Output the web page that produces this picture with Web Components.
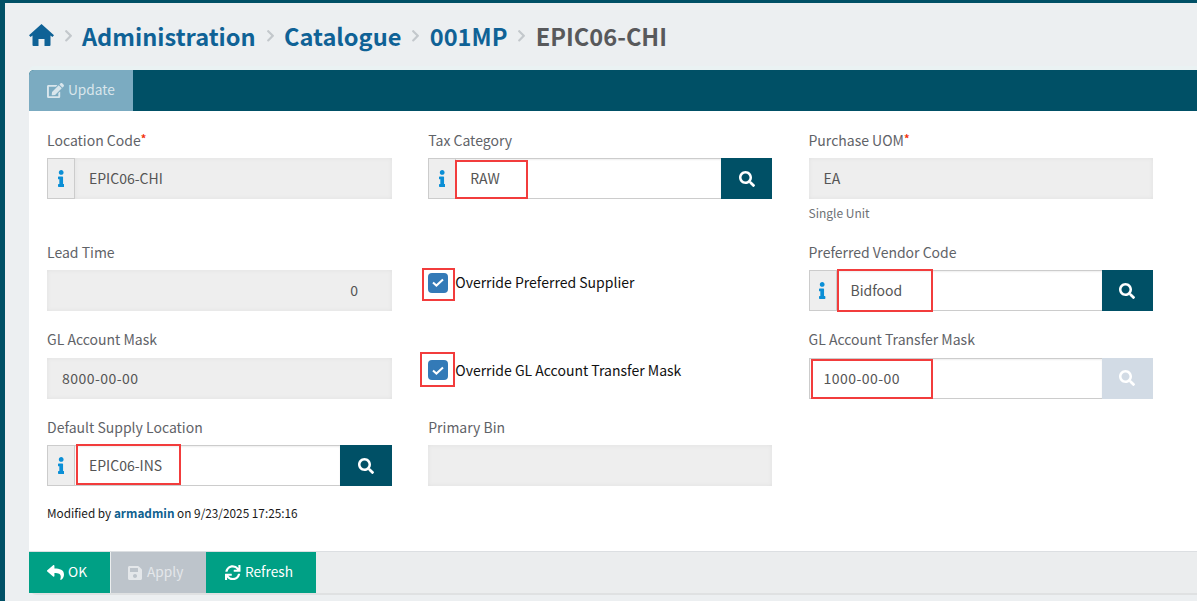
<!DOCTYPE html>
<html>
<head>
<meta charset="utf-8">
<title>Location</title>
<style>
html, body { margin: 0; height: 100%; overflow: hidden; }
body { font-family: "Noto Sans CJK SC", "Noto Sans", sans-serif; font-size: 14px; color: #555; background: #eceff1; }
</style>
</head>
<body>
<app-shell>
  <bread-crumbs slot="crumbs">
    <a>Administration</a>
    <a>Catalogue</a>
    <a>001MP</a>
    <b>EPIC06-CHI</b>
  </bread-crumbs>
  <form-panel>
    <fa-btn slot="tabs" icon="edit" kind="tab">Update</fa-btn>

    <form-field label="Location Code" required value="EPIC06-CHI" info></form-field>
    <form-field label="Tax Category" value="RAW" info lookup editable mark="27,2,73,39"></form-field>
    <form-field label="Purchase UOM" required value="EA" help="Single Unit"></form-field>

    <form-field label="Lead Time" value="0" number></form-field>
    <check-field label="Override Preferred Supplier" mark="-6,-5,33,33"></check-field>
    <form-field label="Preferred Vendor Code" value="Bidfood" info lookup editable mark="28,-1,96,43"></form-field>

    <form-field label="GL Account Mask" value="8000-00-00" mask></form-field>
    <check-field label="Override GL Account Transfer Mask" mark="-8,-8,35,35"></check-field>
    <form-field label="GL Account Transfer Mask" value="1000-00-00" mask lookup editable disabled mark="2,1,122,40"></form-field>

    <form-field label="Default Supply Location" value="EPIC06-INS" info lookup editable mark="29,-1,105,41" style="--find: 52px"></form-field>
    <form-field label="Primary Bin" value=""></form-field>

    <span slot="meta">Modified by <strong>armadmin</strong> on 9/23/2025 17:25:16</span>

    <fa-btn slot="actions" icon="reply">OK</fa-btn>
    <fa-btn slot="actions" icon="save" disabled>Apply</fa-btn>
    <fa-btn slot="actions" icon="refresh">Refresh</fa-btn>
  </form-panel>
</app-shell>

<script>
const FONT = '"Noto Sans CJK SC", "Noto Sans", sans-serif';
// [viewBox, path, width, height]
const ICONS = {
  home: ["0 0 25 22", "M12.5 0 25 11.2 23.4 13 21.5 11.5V21a1 1 0 0 1-1 1H15.5v-7h-6v7H4.5a1 1 0 0 1-1-1V11.5L1.6 13 0 11.2Z", 25, 22],
  chevron: ["27 37 265 438", "M285.476 272.971L91.132 467.314c-9.373 9.373-24.569 9.373-33.941 0l-22.667-22.667c-9.357-9.357-9.375-24.522-.04-33.901L188.505 256 34.484 101.255c-9.335-9.379-9.317-24.544.04-33.901l22.667-22.667c9.373-9.373 24.569-9.373 33.941 0L285.475 239.03c9.373 9.372 9.373 24.568.001 33.941z", 7, 11.6],
  search: ["0 0 512 512", "M505 442.7L405.3 343c-4.5-4.5-10.6-7-17-7H372c27.6-35.3 44-79.7 44-128C416 93.1 322.9 0 208 0S0 93.1 0 208s93.1 208 208 208c48.3 0 92.7-16.4 128-44v16.3c0 6.4 2.5 12.5 7 17l99.7 99.7c9.4 9.4 24.6 9.4 33.9 0l28.3-28.3c9.4-9.4 9.4-24.6.1-34zM208 336c-70.7 0-128-57.2-128-128 0-70.7 57.2-128 128-128 70.7 0 128 57.2 128 128 0 70.7-57.2 128-128 128z", 16, 16],
  edit: ["0 0 576 512", "M402.6 83.2l90.2 90.2c3.8 3.8 3.8 10 0 13.8L274.4 405.6l-92.8 10.3c-12.4 1.4-22.9-9.1-21.5-21.5l10.3-92.8L388.8 83.2c3.8-3.8 10-3.8 13.8 0zm162-22.9l-48.8-48.8c-15.2-15.2-39.9-15.2-55.2 0l-35.4 35.4c-3.8 3.8-3.8 10 0 13.8l90.2 90.2c3.8 3.8 10 3.8 13.8 0l35.4-35.4c15.2-15.3 15.2-40 0-55.2zM384 346.2V448H64V128h229.8c3.2 0 6.2-1.3 8.5-3.5l40-40c7.6-7.6 2.2-20.5-8.5-20.5H48C21.5 64 0 85.5 0 112v352c0 26.5 21.5 48 48 48h352c26.5 0 48-21.5 48-48V306.2c0-10.7-12.9-16-20.5-8.5l-40 40c-2.2 2.3-3.5 5.3-3.5 8.5z", 17, 15.1],
  reply: ["0 0 512 512", "M8.309 189.836L184.313 37.851C199.719 24.546 224 35.347 224 56.015v80.053c160.629 1.839 288 34.032 288 186.258 0 61.441-39.581 122.309-83.333 154.132-13.653 9.931-33.111-2.533-28.077-18.631 45.344-145.012-21.507-183.51-176.59-185.742V360c0 20.7-24.3 31.453-39.687 18.164l-176.004-152c-11.071-9.562-11.086-26.753 0-36.328z", 17, 17],
  save: ["0 32 448 448", "M433.941 129.941l-83.882-83.882A48 48 0 0 0 316.118 32H48C21.49 32 0 53.49 0 80v352c0 26.51 21.49 48 48 48h352c26.51 0 48-21.49 48-48V163.882a48 48 0 0 0-14.059-33.941zM224 416c-35.346 0-64-28.654-64-64 0-35.346 28.654-64 64-64s64 28.654 64 64c0 35.346-28.654 64-64 64zm96-304.52V212c0 6.627-5.373 12-12 12H76c-6.627 0-12-5.373-12-12V108c0-6.627 5.373-12 12-12h228.52c3.183 0 6.235 1.264 8.485 3.515l3.48 3.48A11.996 11.996 0 0 1 320 111.48z", 14, 14],
  refresh: ["0 0 512 512", "M440.65 12.57l4 82.77A247.16 247.16 0 0 0 255.83 8C134.73 8 33.91 94.92 12.29 209.82A12 12 0 0 0 24.09 224h49.05a12 12 0 0 0 11.67-9.26 175.91 175.91 0 0 1 317-56.94l-101.46-4.86a12 12 0 0 0-12.57 12v47.41a12 12 0 0 0 12 12H500a12 12 0 0 0 12-12V12a12 12 0 0 0-12-12h-47.37a12 12 0 0 0-11.98 12.57zM255.83 432a175.61 175.61 0 0 1-146-77.8l101.8 4.87a12 12 0 0 0 12.57-12v-47.4a12 12 0 0 0-12-12H12a12 12 0 0 0-12 12V500a12 12 0 0 0 12 12h47.35a12 12 0 0 0 12-12.6l-4.15-82.57A247.17 247.17 0 0 0 255.83 504c121.11 0 221.93-86.92 243.55-201.82a12 12 0 0 0-11.8-14.18h-49.05a12 12 0 0 0-11.67 9.26A175.86 175.86 0 0 1 255.83 432z", 15.5, 15.5],
  info: ["0 0 192 512", "M20 424.229h20V279.771H20c-11.046 0-20-8.954-20-20V212c0-11.046 8.954-20 20-20h112c11.046 0 20 8.954 20 20v212.229h20c11.046 0 20 8.954 20 20V492c0 11.046-8.954 20-20 20H20c-11.046 0-20-8.954-20-20v-47.771c0-11.046 8.954-20 20-20zM96 0C56.235 0 24 32.235 24 72s32.235 72 72 72 72-32.235 72-72S135.764 0 96 0z", 6.4, 17]
};

function svg(name) {
  const [vb, d, w, h] = ICONS[name];
  return `<svg width="${w}" height="${h}" viewBox="${vb}" fill="currentColor" aria-hidden="true"><path d="${d}"/></svg>`;
}

// red annotation box drawn over a control
function markHtml(value) {
  if (!value) return "";
  const [l, t, w, h] = value.split(",");
  return `<i class="mark" style="left:${l}px;top:${t}px;width:${w}px;height:${h}px"></i>`;
}
const MARK_CSS = `.mark { position: absolute; box-sizing: border-box; border: 2px solid #f23c3c; pointer-events: none; }`;

class AppShell extends HTMLElement {
  constructor() {
    super();
    this.attachShadow({ mode: "open" });
    this.shadowRoot.innerHTML = `
<style>
:host { display: block; box-sizing: border-box; height: 100vh; border-top: 3px solid #005066; border-left: 5px solid #005066; background: #eceff1; }
.head { height: 67px; box-sizing: border-box; padding: 0 0 2px 24px; display: flex; align-items: center; }
</style>
<div class="head"><slot name="crumbs"></slot></div>
<slot></slot>`;
  }
}

class BreadCrumbs extends HTMLElement {
  constructor() {
    super();
    this.attachShadow({ mode: "open" });
    this.shadowRoot.innerHTML = `
<style>
:host { display: flex; align-items: center; font: 600 23.6px/34px ${FONT}; color: #0f6296; }
.home { display: flex; color: #0f6296; margin-top: -2px; margin-right: 11px; }
svg { display: block; flex: none; }
nav { display: flex; align-items: center; }
.sep { display: flex; color: #c3c8cc; width: 7px; margin: 1px 10.4px 0 11px; }
.first { margin-right: 10px; margin-left: 0; }
::slotted(b) { color: #58595b; font-weight: 600; }
</style>
<span class="home">${svg("home")}</span>
<span class="sep first">${svg("chevron")}</span>
<nav id="items"></nav>`;
    const nav = this.shadowRoot.getElementById("items");
    [...this.children].forEach((el, i, all) => {
      el.slot = "c" + i;
      const s = document.createElement("slot");
      s.name = "c" + i;
      nav.append(s);
      if (i < all.length - 1) {
        const sep = document.createElement("span");
        sep.className = "sep";
        sep.innerHTML = svg("chevron");
        nav.append(sep);
      }
    });
  }
}

class FormPanel extends HTMLElement {
  constructor() {
    super();
    this.attachShadow({ mode: "open" });
    this.shadowRoot.innerHTML = `
<style>
:host { display: block; margin-left: 24px; }
.bar { height: 41px; background: #005066; border-radius: 5px 0 0 0; display: flex; box-shadow: 0 -4px 0 #eaf2f3; }
.body { background: #fff; height: 440px; box-sizing: border-box; padding: 18.5px 0 0 18px; }
.grid { display: grid; grid-template-columns: 345px 344px 344px; grid-template-rows: 94px 69.5px 69.5px 69.5px; column-gap: 36.25px; row-gap: 18px; }
.meta { margin-top: 17px; font-size: 11.8px; line-height: 20px; color: #1a1a1a; }
.foot { height: 42px; box-sizing: border-box; background: #ebedee; border-top: 1px solid #dcdfe2; border-bottom-left-radius: 8px; display: flex; box-shadow: 0 2px 0 #dfe1e2; }
.foot ::slotted(:first-child) { border-bottom-left-radius: 8px; }
</style>
<div class="bar"><slot name="tabs"></slot></div>
<div class="body">
  <div class="grid"><slot></slot></div>
  <div class="meta"><slot name="meta"></slot></div>
</div>
<div class="foot"><slot name="actions"></slot></div>`;
  }
}

class FaBtn extends HTMLElement {
  constructor() {
    super();
    this.attachShadow({ mode: "open" });
    const icon = this.getAttribute("icon");
    this.shadowRoot.innerHTML = `
<style>
:host { display: flex; align-items: center; gap: 4px; box-sizing: border-box; height: 41px; padding: 0 18px; font: 400 13.7px/20px ${FONT}; color: #fff; background: #00a085; }
:host([disabled]) { background: #bdc4cb; color: #e4e7ea; padding-left: 17px; gap: 5px; }
:host([kind="tab"]) { background: #7babc1; color: #d9e6ec; width: 104px; border-top-left-radius: 5px; }
:host([icon="reply"]) { width: 81px; margin-right: 1px; }
:host([icon="save"]) { width: 95px; }
:host([icon="refresh"]) { width: 110px; padding-left: 19px; gap: 4.5px; }
svg { display: block; flex: none; }
span { position: relative; top: -2px; }
</style>
${svg(icon)}<span><slot></slot></span>`;
  }
}

class FormField extends HTMLElement {
  constructor() {
    super();
    this.attachShadow({ mode: "open" });
    const a = (n) => this.getAttribute(n);
    const has = (n) => this.hasAttribute(n);
    const req = has("required") ? `<sup>*</sup>` : "";
    const info = has("info") ? `<span class="info">${svg("info")}</span>` : "";
    const lookup = has("lookup") ? `<span class="find">${svg("search")}</span>` : "";
    const help = a("help") ? `<div class="help">${a("help")}</div>` : "";
    this.shadowRoot.innerHTML = `
<style>
:host { display: block; min-width: 0; font-family: ${FONT}; }
label { display: block; height: 28.5px; font-size: 14px; line-height: 21px; color: #5f6368; white-space: nowrap; }
sup { color: #f2330d; font-size: 11px; line-height: 0; vertical-align: 3px; font-weight: 700; }
.ctl { position: relative; display: flex; height: 41px; box-sizing: border-box; }
.val { flex: 1; min-width: 0; box-sizing: border-box; padding: 0 15px 1px; display: flex; align-items: center; font-size: 14px; color: #555; background: #eee; box-shadow: inset 0 0 4px #e0e0e0; }
.hasinfo .val { padding-left: 14px; }
.editable .val { background: #fff; border: 1px solid #ccc; border-width: 1px 0; box-shadow: inset 0 1px 2px rgba(0,0,0,.07); padding: 0 14px 1px; }
.editable.noinfo .val { border-left: 1px solid #ccc; }
.number .val { justify-content: flex-end; padding-right: 34px; }
.mask .val { letter-spacing: .45px; }
.info { flex: none; width: 28px; box-sizing: border-box; display: flex; align-items: center; justify-content: center; background: #eee; border: 1px solid #ccc; color: #0b8fd6; }
.find { flex: none; width: var(--find, 51px); display: flex; align-items: center; justify-content: center; background: #005066; color: #fff; }
.disabled .find { background: #d2dbe5; }
.help { margin-top: 5px; font-size: 12px; line-height: 18px; color: #6d7175; }
${MARK_CSS}
</style>
<label>${a("label")}${req}</label>
<div class="ctl ${has("editable") ? "editable" : ""} ${has("info") ? "hasinfo" : "noinfo"} ${has("number") ? "number" : ""} ${has("mask") ? "mask" : ""} ${has("disabled") ? "disabled" : ""}">
  ${info}<span class="val">${a("value")}</span>${lookup}${markHtml(a("mark"))}
</div>
${help}`;
  }
}

class CheckField extends HTMLElement {
  constructor() {
    super();
    this.attachShadow({ mode: "open" });
    this.shadowRoot.innerHTML = `
<style>
:host { display: block; padding-top: 31px; font-family: ${FONT}; }
.row { display: flex; align-items: center; gap: 7px; height: 20px; font-size: 14px; color: #111; white-space: nowrap; }
.box { position: relative; flex: none; width: 20px; height: 20px; }
.tick { width: 20px; height: 20px; border-radius: 4px; background: #337ab7; display: flex; align-items: center; justify-content: center; }
svg { display: block; }
.text { position: relative; top: -.5px; }
${MARK_CSS}
</style>
<div class="row">
  <span class="box"><span class="tick"><svg width="12" height="9" viewBox="0 0 12 9" fill="none" stroke="#fff" stroke-width="2"><path d="M1 4.5 4.4 7.6 11 1.4"/></svg></span>${markHtml(this.getAttribute("mark"))}</span>
  <span class="text">${this.getAttribute("label")}</span>
</div>`;
  }
}

customElements.define("app-shell", AppShell);
customElements.define("bread-crumbs", BreadCrumbs);
customElements.define("form-panel", FormPanel);
customElements.define("fa-btn", FaBtn);
customElements.define("form-field", FormField);
customElements.define("check-field", CheckField);

// light DOM text inside crumbs and meta line
const st = document.createElement("style");
st.textContent = `bread-crumbs a { color: inherit; } form-panel strong { color: #0f5f8f; font-weight: 700; }`;
document.head.append(st);
</script>
</body>
</html>
